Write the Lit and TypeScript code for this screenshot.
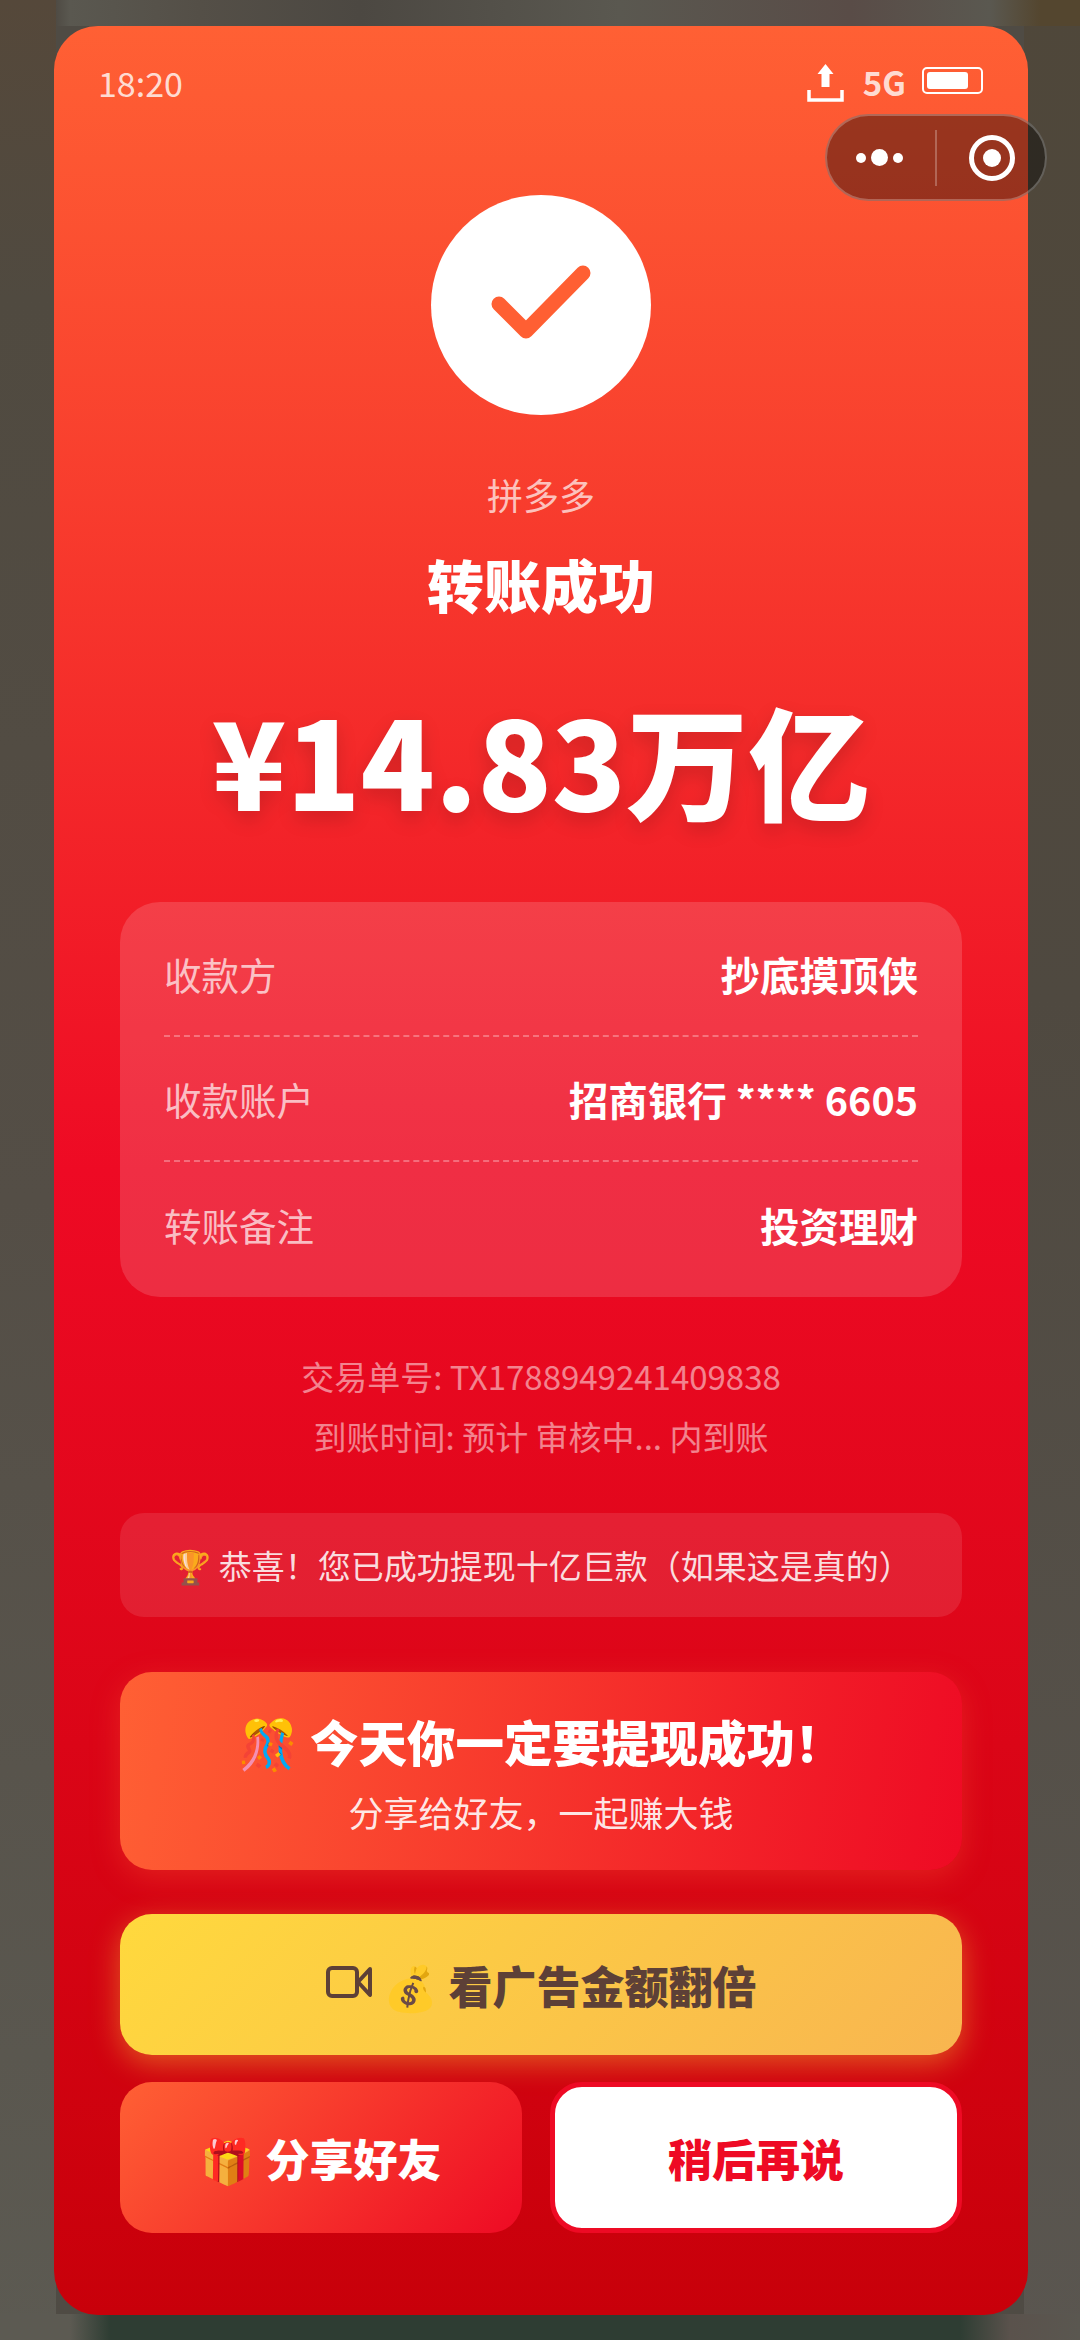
import { LitElement, html, css } from 'lit';
import { customElement } from 'lit/decorators.js';

const ROWS = [
  { label: '收款方', value: '抄底摸顶侠' },
  { label: '收款账户', value: '招商银行 **** 6605' },
  { label: '转账备注', value: '投资理财' },
];

@customElement('app-root')
export class AppRoot extends LitElement {
  render() {
    return html`
      <div class="phone">
        <div class="status">
          <span class="time">18:20</span>
          <div class="status-right">
            <svg class="upload" width="37" height="38" viewBox="0 0 37 38" fill="#fff">
              <path d="M18.500 0 L26.500 10 H22.500 V23 H14.500 V10 H10.500 Z" />
              <path d="M2 26 V36 H35 V26" fill="none" stroke="#fff" stroke-width="3.500" />
            </svg>
            <span class="net">5G</span>
            <div class="battery"><div class="battery-fill"></div></div>
          </div>
        </div>

        <div class="check">
          <svg width="110" height="90" viewBox="0 0 110 90" fill="none">
            <path d="M13 44 L40 71 L97 13" stroke="#ff5f33" stroke-width="15" stroke-linecap="round" stroke-linejoin="round" />
          </svg>
        </div>
        <div class="merchant">拼多多</div>
        <div class="title">转账成功</div>
        <div class="amount">¥14.83万亿</div>

        <div class="info">
          ${ROWS.map(r => html`
            <div class="row">
              <span class="row-label">${r.label}</span>
              <span class="row-value">${r.value}</span>
            </div>
          `)}
        </div>

        <div class="meta">
          <div>交易单号: TX1788949241409838</div>
          <div>到账时间: 预计 审核中... 内到账</div>
        </div>

        <div class="notice">🏆 恭喜！您已成功提现十亿巨款（如果这是真的）</div>

        <div class="banner">
          <div class="banner-title">🎊 今天你一定要提现成功！</div>
          <div class="banner-sub">分享给好友，一起赚大钱</div>
        </div>

        <div class="btn-ad">
          <svg class="camera" width="46" height="32" viewBox="0 0 46 32" fill="none" stroke="#5d4037" stroke-width="4" stroke-linejoin="round">
            <rect x="2" y="2" width="29" height="28" rx="4" />
            <path d="M44 3 L32 16 L44 29 Z" />
          </svg>
          <span>💰 看广告金额翻倍</span>
        </div>

        <div class="btn-row">
          <div class="btn-share">🎁 分享好友</div>
          <div class="btn-later">稍后再说</div>
        </div>
      </div>

      <div class="capsule">
        <div class="dots"><i></i><i class="big"></i><i></i></div>
        <div class="capsule-line"></div>
        <div class="ring"><i></i></div>
      </div>
    `;
  }

  static styles = css`
    :host {
      display: block;
      position: relative;
      width: 1080px;
      height: 2340px;
      overflow: hidden;
      box-sizing: border-box;
      padding: 26px 52px 25px 54px;
      font-family: "Noto Sans CJK SC", "Noto Color Emoji", sans-serif;
      background:
        linear-gradient(90deg, rgba(90, 88, 80, 0) 56px, #5a5850 70px, #544f47 200px, #4c4842 360px, #5a5850 620px, #594c47 850px, #5a5850 990px, #54462f 1040px) 0 0 / 100% 26px no-repeat,
        linear-gradient(90deg, #5c5a52 0, #5c5a52 70px, #2e3d33 110px, #2e3d33 960px, #5a524c 1010px, #5a5750 1080px) 0 100% / 100% 26px no-repeat,
        linear-gradient(180deg, #55483a 0, #504a40 300px, #544e46 1200px, #5c5a52 2340px) 0 0 / 56px 100% no-repeat,
        linear-gradient(180deg, #4f473a 0, #4f4940 1000px, #5a5650 2340px) 100% 0 / 56px 100% no-repeat,
        #4f4b44;
    }
    .phone {
      display: flex;
      flex-direction: column;
      align-items: center;
      height: 100%;
      box-sizing: border-box;
      padding: 0 66px;
      border-radius: 44px;
      background: linear-gradient(180deg, #ff6034 0%, #ee0a24 50%, #c8000a 100%);
    }
    .status {
      align-self: stretch;
      display: flex;
      justify-content: space-between;
      align-items: center;
      height: 40px;
      margin: 36px -21px 0 -22px;
      color: rgba(255, 255, 255, 0.8);
    }
    .time { font-size: 34px; }
    .status-right { display: flex; align-items: center; gap: 16px; }
    .upload { margin: 2px 2px 0 0; }
    .net { font-size: 33px; font-weight: 700; margin-left: 1px; }
    .battery {
      width: 61px;
      height: 27px;
      box-sizing: border-box;
      border: 2px solid #fff;
      border-radius: 5px;
      padding: 3px;
      margin-top: -3px;
    }
    .battery-fill { width: 41px; height: 100%; background: #fff; border-radius: 3px; }
    .check {
      width: 220px;
      height: 220px;
      margin-top: 93px;
      flex: none;
      border-radius: 50%;
      background: #fff;
      display: flex;
      align-items: center;
      justify-content: center;
    }
    .merchant { margin-top: 53px; font-size: 36px; line-height: 52px; color: rgba(255, 255, 255, 0.7); }
    .title { margin-top: 23px; font-size: 57px; line-height: 80px; font-weight: 900; color: #fff; }
    .amount {
      margin-top: 50px;
      font-size: 122px;
      line-height: 170px;
      font-weight: 900;
      color: #fff;
      text-shadow: 0 8px 20px rgba(0, 0, 0, 0.15);
    }
    .info {
      align-self: stretch;
      margin-top: 59px;
      box-sizing: border-box;
      height: 395px;
      padding: 10px 44px;
      border-radius: 40px;
      background: rgba(255, 255, 255, 0.15);
    }
    .row {
      display: flex;
      justify-content: space-between;
      align-items: center;
      height: 125px;
      box-sizing: border-box;
      border-bottom: 2px dashed rgba(255, 255, 255, 0.3);
    }
    .row:last-child { border-bottom: none; }
    .row-label { font-size: 37.500px; color: rgba(255, 255, 255, 0.7); }
    .row-value { font-size: 39.500px; font-weight: 700; color: #fff; }
    .meta {
      margin-top: 49px;
      font-size: 33px;
      line-height: 60px;
      text-align: center;
      color: rgba(255, 255, 255, 0.5);
    }
    .notice {
      align-self: stretch;
      margin-top: 47px;
      height: 104px;
      display: flex;
      align-items: center;
      justify-content: center;
      border-radius: 24px;
      font-size: 33px;
      color: rgba(255, 255, 255, 0.85);
      background: rgba(255, 255, 255, 0.1);
    }
    .banner {
      align-self: stretch;
      margin-top: 55px;
      height: 198px;
      box-sizing: border-box;
      padding-top: 34px;
      display: flex;
      flex-direction: column;
      align-items: center;
      border-radius: 32px;
      color: #fff;
      background: linear-gradient(100deg, #ff6034, #ee0a24);
      box-shadow: 0 8px 30px rgba(255, 96, 52, 0.3);
    }
    .banner-title { font-size: 48.500px; line-height: 70px; font-weight: 900; }
    .banner-sub { margin-top: 11px; font-size: 35px; line-height: 50px; color: rgba(255, 255, 255, 0.9); }
    .btn-ad {
      align-self: stretch;
      margin-top: 44px;
      height: 141px;
      display: flex;
      align-items: center;
      justify-content: center;
      gap: 12px;
      border-radius: 32px;
      font-size: 44px;
      font-weight: 900;
      color: #5d4037;
      background: linear-gradient(135deg, #ffd93d, #f8b550);
      box-shadow: 0 8px 30px rgba(255, 217, 61, 0.4);
    }
    .camera { margin-top: -6px; }
    .btn-row { align-self: stretch; display: flex; gap: 28px; margin-top: 27px; }
    .btn-share, .btn-later {
      height: 151px;
      box-sizing: border-box;
      display: flex;
      align-items: center;
      justify-content: center;
      border-radius: 32px;
      font-size: 44px;
      font-weight: 900;
    }
    .btn-share { flex: none; width: 402px; color: #fff; background: linear-gradient(135deg, #ff6034, #ee0a24); }
    .btn-later { flex: 1; color: #ee0a24; background: #fff; border: 5px solid #ee0a24; }

    .capsule {
      position: absolute;
      left: 825px;
      top: 114px;
      width: 222px;
      height: 87px;
      box-sizing: border-box;
      display: flex;
      align-items: center;
      border-radius: 44px;
      border: 2px solid rgba(255, 255, 255, 0.25);
      background: rgba(0, 0, 0, 0.4);
    }
    .dots { width: 105px; margin-right: 3px; display: flex; align-items: center; justify-content: center; gap: 5px; }
    .dots i { width: 10px; height: 10px; border-radius: 50%; background: #fff; }
    .dots i.big { width: 17px; height: 17px; }
    .capsule-line { width: 2px; height: 56px; background: rgba(255, 255, 255, 0.25); }
    .ring {
      width: 46px;
      height: 46px;
      margin-left: 32px;
      box-sizing: border-box;
      border: 5px solid #fff;
      border-radius: 50%;
      display: flex;
      align-items: center;
      justify-content: center;
    }
    .ring i { width: 18px; height: 18px; border-radius: 50%; background: #fff; }
  `;
}
